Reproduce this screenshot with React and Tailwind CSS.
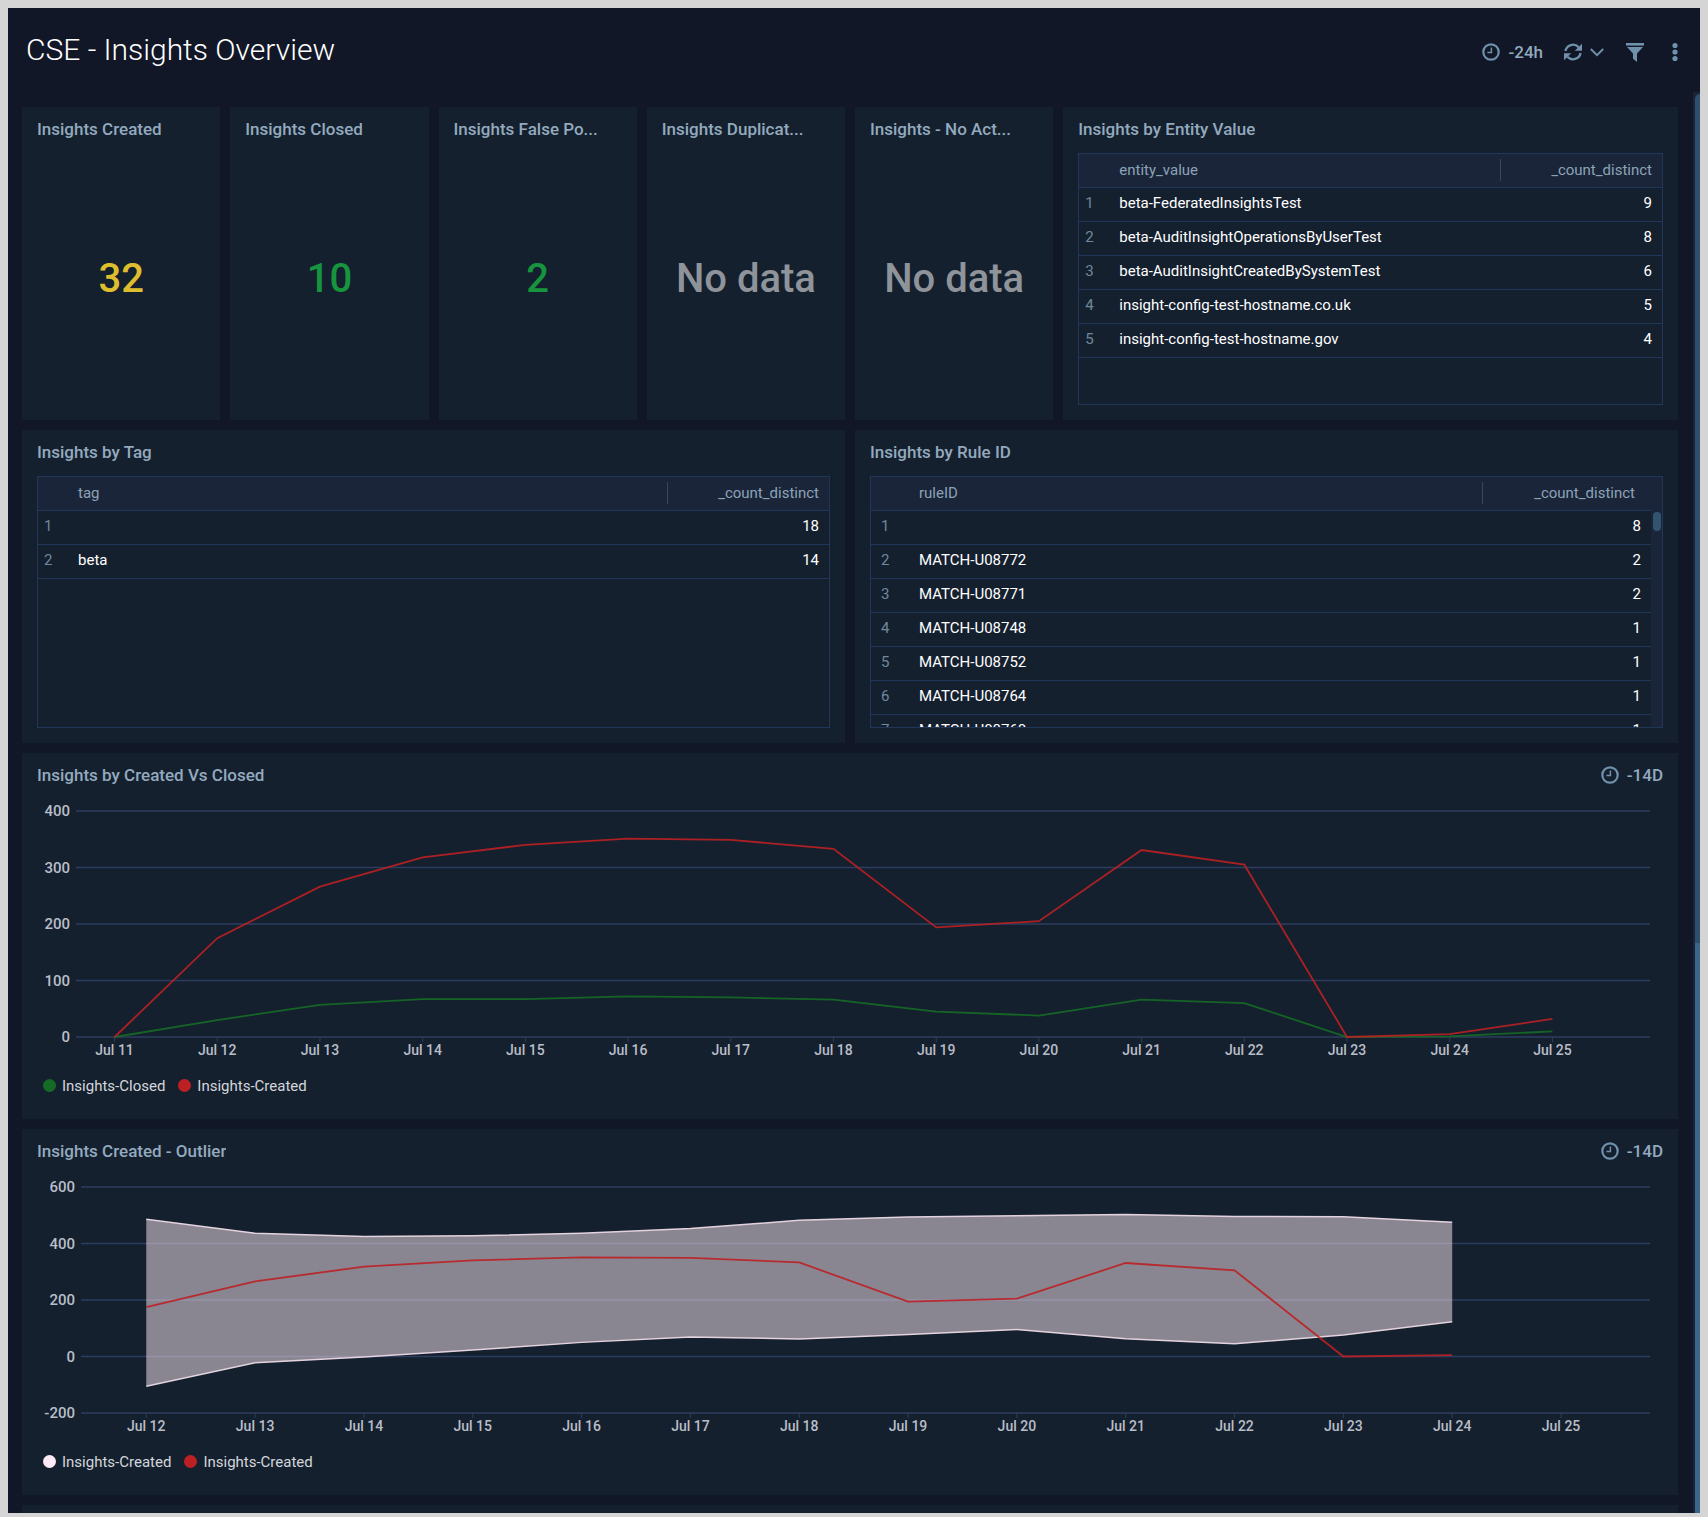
import { useLayoutEffect, useRef, useState } from "react";

const RED = "#bd2023";
const GREEN = "#156b26";

function ClockIcon() {
  return (
    <svg width="18" height="18" viewBox="0 0 18 18" fill="none" stroke="#6f91ab" aria-hidden="true">
      <circle cx="9" cy="9" r="7.7" strokeWidth="2.2" />
      <path d="M9.4 4.6V9.6H5.4" strokeWidth="1.5" />
    </svg>
  );
}

function RefreshIcon() {
  return (
    <svg width="18" height="18" viewBox="0 0 18 18" fill="none" aria-hidden="true">
      <path d="M1.4 8A7.7 7.7 0 0 1 14.6 4.2" stroke="#6f91ab" strokeWidth="2.3" />
      <path d="M18 .8V7.8H10.8Z" fill="#6f91ab" />
      <path d="M16.6 10A7.7 7.7 0 0 1 3.4 13.8" stroke="#6f91ab" strokeWidth="2.3" />
      <path d="M0 17.2V10.2H7.2Z" fill="#6f91ab" />
    </svg>
  );
}

function ChevronIcon() {
  return (
    <svg width="14" height="9" viewBox="0 0 14 9" fill="none" aria-hidden="true">
      <path d="M.8 1L7 7.2L13.2 1" stroke="#6f91ab" strokeWidth="1.9" />
    </svg>
  );
}

function FilterIcon() {
  return (
    <svg width="18" height="19" viewBox="0 0 18 19" fill="#6f91ab" aria-hidden="true">
      <path d="M0 0H18V2.6H0Z" />
      <path d="M1 4H17L11 10.6V19L7 15.8V10.6Z" />
    </svg>
  );
}

function KebabIcon() {
  return (
    <svg width="6" height="20" viewBox="0 0 6 20" fill="#6f91ab" aria-hidden="true">
      <circle cx="3" cy="3.5" r="2.6" />
      <circle cx="3" cy="10" r="2.6" />
      <circle cx="3" cy="16.5" r="2.6" />
    </svg>
  );
}

function Panel({ title, range, className = "", children }) {
  return (
    <section className={`flex min-w-0 flex-col bg-[#15202f] ${className}`}>
      <header className="flex h-[46px] shrink-0 items-center justify-between gap-4 px-[15px] pb-[3px]">
        <h2 className="truncate text-[17px] leading-6 font-medium text-[#93aabe]">{title}</h2>
        {range && (
          <button type="button" className="flex items-center gap-2 text-[17px] leading-6 font-medium text-[#93aabe]">
            <ClockIcon />
            {range}
          </button>
        )}
      </header>
      {children}
    </section>
  );
}

function Stat({ title, value, color }) {
  return (
    <Panel title={title}>
      <div className="flex grow items-center justify-center pb-[15px]">
        <span className={`text-[40px] leading-none font-medium ${color}`}>{value}</span>
      </div>
    </Panel>
  );
}

function DataTable({ label, rows, scroll }) {
  return (
    <div className="mx-[15px] mb-[15px] flex h-[252px] overflow-hidden border border-[#22365a]">
      <table className="w-full table-fixed self-start text-[15px] leading-5">
        <colgroup>
          <col className={scroll ? "w-[42px]" : "w-[34px]"} />
          <col />
          <col className={scroll ? "w-[169px]" : "w-[162px]"} />
        </colgroup>
        <thead>
          <tr className="h-[33px] border-b border-[#22365a] bg-[#1b2539] text-[#8ba3b8]">
            <td />
            <th scope="col" className="pl-[6px] text-left font-normal">{label}</th>
            <th scope="col" className="p-0 font-normal">
              <div className={`flex h-[22px] items-center justify-end border-l border-[#34495f] ${scroll ? "pr-4" : "pr-[10px]"}`}>
                _count_distinct
              </div>
            </th>
          </tr>
        </thead>
        <tbody>
          {rows.map(([name, count], i) => (
            <tr key={i} className="h-[34px] border-b border-[#22365a] text-white">
              <td className={`pb-[2px] text-[#6f889d] ${scroll ? "pl-[10px]" : "pl-[6px]"}`}>{i + 1}</td>
              <td className="truncate pb-[2px] pl-[6px]">{name}</td>
              <td className="pr-[10px] pb-[2px] text-right">{count}</td>
            </tr>
          ))}
        </tbody>
      </table>
      {scroll && (
        <div className="flex w-[11px] shrink-0 justify-center bg-[#1b2539] pt-[35px]">
          <div className="h-[19px] w-2 rounded-full bg-[#33546f]" />
        </div>
      )}
    </div>
  );
}

function useWidth() {
  const ref = useRef(null);
  const [width, setWidth] = useState(0);
  useLayoutEffect(() => {
    const measure = () => setWidth(ref.current.clientWidth);
    measure();
    const observer = new ResizeObserver(measure);
    observer.observe(ref.current);
    return () => observer.disconnect();
  }, []);
  return [ref, width];
}

const CHART_TOP = 12;
const CHART_BOTTOM = 238;
const RIGHT_MARGIN = 28;

function LineChart({ label, left, min, max, step, days, inset, band, series, legend }) {
  const [ref, width] = useWidth();
  const right = width - RIGHT_MARGIN;
  const plot = right - left;
  const first = left + plot * inset[0];
  const last = left + plot * inset[1];
  const x = (i) => first + ((last - first) * i) / (days.length - 1);
  const y = (v) => CHART_BOTTOM - ((v - min) / (max - min)) * (CHART_BOTTOM - CHART_TOP);
  const points = (values) => values.map((v, i) => `${x(i)},${y(v)}`);
  const ticks = [];
  for (let v = min; v <= max; v += step) ticks.push(v);

  return (
    <>
      <div ref={ref} className="h-[268px]">
        {width > 0 && (
          <svg width={width} height="268" role="img" aria-label={label} className="block">
            {ticks.map((v) => (
              <g key={v}>
                <line x1={left} x2={right} y1={y(v)} y2={y(v)} stroke="#2d3d5f" strokeWidth="1.4" />
                <text x={left - 6} y={y(v) + 5} textAnchor="end" className="fill-[#b9bec8] text-[15px] font-medium">
                  {v}
                </text>
              </g>
            ))}
            {days.map((d, i) => (
              <g key={d}>
                <line x1={x(i)} x2={x(i)} y1={CHART_BOTTOM} y2={CHART_BOTTOM + 5} stroke="#2d3d5f" />
                <text x={x(i)} y={CHART_BOTTOM + 18} textAnchor="middle" className="fill-[#b9bec8] text-[14px] font-medium">
                  Jul {d}
                </text>
              </g>
            ))}
            {band && (
              <>
                <polygon
                  points={[...points(band.upper), ...points(band.lower).reverse()].join(" ")}
                  fill="#fdeaf4"
                  fillOpacity="0.5"
                />
                <polyline points={points(band.upper).join(" ")} fill="none" stroke="#e3d3de" strokeWidth="1.5" />
                <polyline points={points(band.lower).join(" ")} fill="none" stroke="#e3d3de" strokeWidth="1.5" />
              </>
            )}
            {series.map((s) => (
              <polyline key={s.color} points={points(s.values).join(" ")} fill="none" stroke={s.color} strokeWidth="1.8" strokeOpacity="0.9" />
            ))}
          </svg>
        )}
      </div>
      <ul className="flex h-[37px] items-center gap-[13px] px-[21px] text-[15px] leading-5 text-[#d3d6db]">
        {legend.map(([color, text]) => (
          <li key={color} className="flex items-center gap-[6px]">
            <span className={`size-[13px] rounded-full ${color}`} />
            {text}
          </li>
        ))}
      </ul>
      <div className="h-[15px]" />
    </>
  );
}

const ENTITIES = [
  ["beta-FederatedInsightsTest", 9],
  ["beta-AuditInsightOperationsByUserTest", 8],
  ["beta-AuditInsightCreatedBySystemTest", 6],
  ["insight-config-test-hostname.co.uk", 5],
  ["insight-config-test-hostname.gov", 4],
];

const TAGS = [
  ["", 18],
  ["beta", 14],
];

const RULES = [
  ["", 8],
  ["MATCH-U08772", 2],
  ["MATCH-U08771", 2],
  ["MATCH-U08748", 1],
  ["MATCH-U08752", 1],
  ["MATCH-U08764", 1],
  ["MATCH-U08760", 1],
];

const CREATED = [175, 266, 318, 340, 351, 349, 333, 194, 205, 331, 305, 0, 5];
const CLOSED = [0, 30, 57, 67, 67, 72, 70, 66, 45, 38, 66, 60, 0, 1, 10];
const DAYS = [11, 12, 13, 14, 15, 16, 17, 18, 19, 20, 21, 22, 23, 24, 25];
const BAND = {
  upper: [486, 436, 425, 427, 436, 453, 482, 494, 498, 503, 496, 495, 475],
  lower: [-105, -22, -2, 23, 50, 69, 62, 78, 96, 63, 45, 76, 123],
};

export default function App() {
  return (
    <div className="h-screen bg-[#d5d5d5] px-2 pt-2 pb-1 font-['Roboto',sans-serif]">
      <div className="flex h-full flex-col overflow-hidden bg-[#111726]">
        <header className="flex h-[84px] shrink-0 items-start justify-between pr-[22px] pl-[18px]">
          <h1 className="pt-6 text-[30px] leading-9 font-light text-white">CSE - Insights Overview</h1>
          <div className="flex h-[88px] items-center">
            <button type="button" className="flex items-center gap-2 text-[17px] leading-6 font-medium text-[#93aabe]">
              <ClockIcon />
              -24h
            </button>
            <button type="button" aria-label="Refresh" className="ml-[21px] flex items-center gap-2">
              <RefreshIcon />
              <ChevronIcon />
            </button>
            <button type="button" aria-label="Filter" className="ml-[22px]">
              <FilterIcon />
            </button>
            <button type="button" aria-label="More options" className="ml-[28px]">
              <KebabIcon />
            </button>
          </div>
        </header>

        <div className="flex min-h-0 grow">
          <main className="grid min-w-0 grow auto-rows-max grid-cols-8 gap-[10px] overflow-hidden pt-[15px] pr-[15px] pl-[14px]">
            <Stat title="Insights Created" value="32" color="text-[#dfbe2e]" />
            <Stat title="Insights Closed" value="10" color="text-[#16943e]" />
            <Stat title="Insights False Po..." value="2" color="text-[#16943e]" />
            <Stat title="Insights Duplicat..." value="No data" color="text-[#8f949a]" />
            <Stat title="Insights - No Act..." value="No data" color="text-[#8f949a]" />
            <Panel title="Insights by Entity Value" className="col-span-3">
              <DataTable label="entity_value" rows={ENTITIES} />
            </Panel>

            <Panel title="Insights by Tag" className="col-span-4">
              <DataTable label="tag" rows={TAGS} />
            </Panel>
            <Panel title="Insights by Rule ID" className="col-span-4">
              <DataTable label="ruleID" rows={RULES} scroll />
            </Panel>

            <Panel title="Insights by Created Vs Closed" range="-14D" className="col-span-8">
              <LineChart
                label="Insights created versus closed"
                left={54}
                min={0}
                max={400}
                step={100}
                days={DAYS}
                inset={[0.0245, 0.938]}
                series={[
                  { color: GREEN, values: CLOSED },
                  { color: RED, values: [0, ...CREATED, 32] },
                ]}
                legend={[
                  ["bg-[#156b26]", "Insights-Closed"],
                  ["bg-[#bd2023]", "Insights-Created"],
                ]}
              />
            </Panel>
            <Panel title="Insights Created - Outlier" range="-14D" className="col-span-8">
              <LineChart
                label="Insights created with outlier band"
                left={59}
                min={-200}
                max={600}
                step={200}
                days={DAYS.slice(1)}
                inset={[0.0416, 0.9433]}
                band={BAND}
                series={[{ color: RED, values: CREATED }]}
                legend={[
                  ["bg-[#fdeaf4]", "Insights-Created"],
                  ["bg-[#bd2023]", "Insights-Created"],
                ]}
              />
            </Panel>
            <section className="col-span-8 h-[313px] bg-[#15202f]" />
          </main>
          <div className="flex w-[7px] shrink-0 flex-col bg-[#1a2438] pt-[2px] pl-[2px]">
            <div className="h-[849px] shrink-0 rounded-tl-[5px] bg-[#2f506c]" />
            <div className="grow bg-[#3d6585]" />
          </div>
        </div>
      </div>
    </div>
  );
}
